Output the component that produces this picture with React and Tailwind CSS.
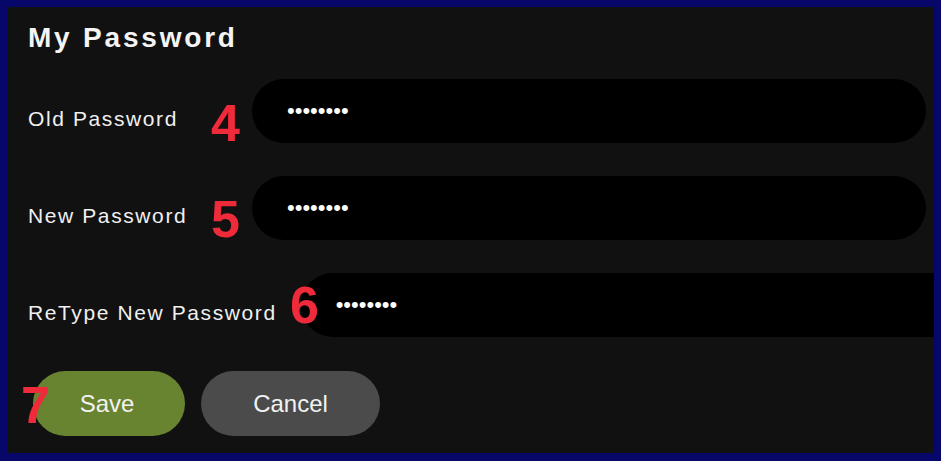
export default function App() {
  const font = { fontFamily: '"Liberation Sans", Arial, sans-serif' };
  const rows = [
    { label: "Old Password" },
    { label: "New Password" },
    { label: "ReType New Password" },
  ];
  return (
    <div className="w-[941px] h-[461px] bg-[#07076a] p-[7px] pb-[8px] box-border" style={font}>
      <div className="relative w-full h-full bg-[#111111] overflow-hidden pl-[21px] pt-[15px]">
        <h1 className="text-[28px] leading-[32px] font-bold tracking-[0.1em] text-[#f4f4f4]">My Password</h1>
        <div className="mt-[25px] flex flex-col gap-[33px]">
          {rows.map((r) => (
            <div key={r.label} className="flex items-center h-[64px]">
              <label className="min-w-[200px] mr-[24px] shrink-0 whitespace-nowrap text-[21px] tracking-[1.6px] text-[#f0f0f0] mt-[16px]">
                {r.label}
              </label>
              <input
                type="password"
                readOnly
                value="12345678"
                className="shrink-0 w-[674px] h-[64px] rounded-full bg-black pl-[35px] text-[22px] text-white outline-none"
                style={font}
              />
            </div>
          ))}
        </div>
        <div className="mt-[34px] ml-[5px] flex gap-[16px]">
          <button className="w-[152px] h-[65px] rounded-full bg-[#688431] text-[24px] text-[#f2f2f2] pr-[4px]">Save</button>
          <button className="w-[179px] h-[65px] rounded-full bg-[#4b4b4b] text-[24px] text-[#f2f2f2]">Cancel</button>
        </div>
        <span className="absolute left-[204px] top-[90px] text-[52px] leading-none font-bold text-[#ee2a3b]">4</span>
        <span className="absolute left-[204px] top-[186px] text-[52px] leading-none font-bold text-[#ee2a3b]">5</span>
        <span className="absolute left-[283px] top-[272px] text-[52px] leading-none font-bold text-[#ee2a3b]">6</span>
        <span className="absolute left-[14px] top-[372px] text-[52px] leading-none font-bold text-[#ee2a3b]">7</span>
      </div>
    </div>
  );
}
